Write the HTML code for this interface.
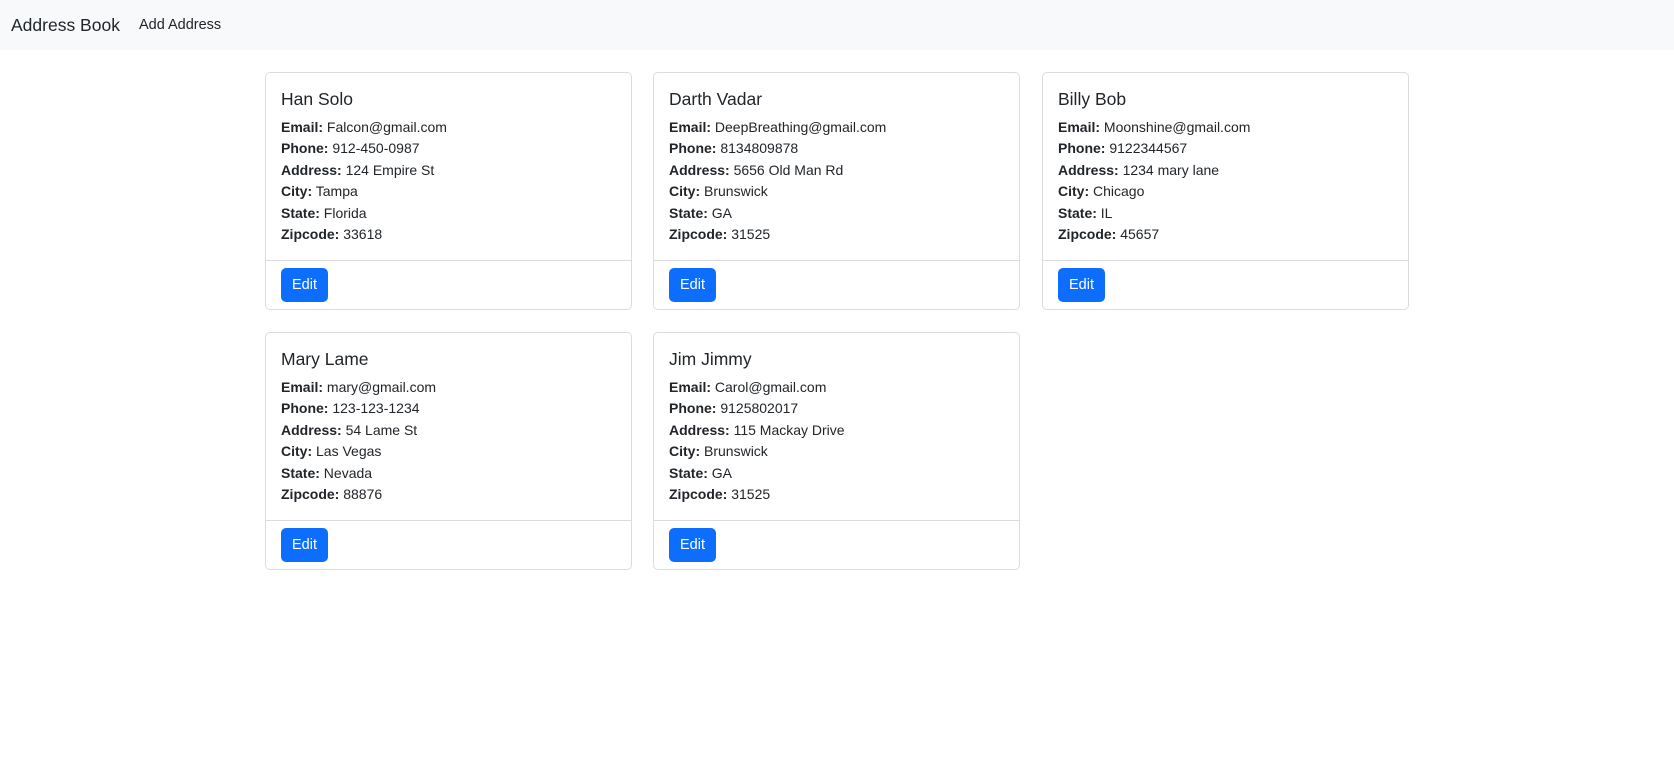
<!DOCTYPE html>
<html><head><style>
body{margin:0;font-family:"Liberation Sans",sans-serif;color:#212529;background:#fff;}
.nav{height:50px;background:#f8f9fa;display:flex;align-items:center;}
.brand{margin-left:11px;font-size:17.5px;}
.link{margin-left:19px;font-size:14.5px;}
.card{position:absolute;width:367px;height:238px;border:1px solid #dcdcdc;border-radius:5px;box-sizing:border-box;}
.body{padding:15px 15px 0 15px;height:188px;box-sizing:border-box;border-bottom:1px solid #dcdcdc;}
h5{margin:0 0 7px;font-weight:normal;font-size:17.5px;line-height:22px;}
.ln{font-size:14px;line-height:21.4px;}
b{font-weight:bold;}
.btn{position:absolute;left:15px;top:195px;width:47px;height:34px;background:#0d6efd;color:#fff;border-radius:5px;font-size:14.5px;line-height:34px;text-align:center;}
</style></head><body>
<div class="nav"><span class="brand">Address Book</span><span class="link">Add Address</span></div>

<div class="card" style="left:265px;top:72px"><div class="body"><h5>Han Solo</h5>
<div class="ln"><b>Email:</b> Falcon@gmail.com</div><div class="ln"><b>Phone:</b> 912-450-0987</div><div class="ln"><b>Address:</b> 124 Empire St</div><div class="ln"><b>City:</b> Tampa</div><div class="ln"><b>State:</b> Florida</div><div class="ln"><b>Zipcode:</b> 33618</div></div><div class="btn">Edit</div></div>

<div class="card" style="left:653px;top:72px"><div class="body"><h5>Darth Vadar</h5>
<div class="ln"><b>Email:</b> DeepBreathing@gmail.com</div><div class="ln"><b>Phone:</b> 8134809878</div><div class="ln"><b>Address:</b> 5656 Old Man Rd</div><div class="ln"><b>City:</b> Brunswick</div><div class="ln"><b>State:</b> GA</div><div class="ln"><b>Zipcode:</b> 31525</div></div><div class="btn">Edit</div></div>

<div class="card" style="left:1042px;top:72px"><div class="body"><h5>Billy Bob</h5>
<div class="ln"><b>Email:</b> Moonshine@gmail.com</div><div class="ln"><b>Phone:</b> 9122344567</div><div class="ln"><b>Address:</b> 1234 mary lane</div><div class="ln"><b>City:</b> Chicago</div><div class="ln"><b>State:</b> IL</div><div class="ln"><b>Zipcode:</b> 45657</div></div><div class="btn">Edit</div></div>

<div class="card" style="left:265px;top:332px"><div class="body"><h5>Mary Lame</h5>
<div class="ln"><b>Email:</b> mary@gmail.com</div><div class="ln"><b>Phone:</b> 123-123-1234</div><div class="ln"><b>Address:</b> 54 Lame St</div><div class="ln"><b>City:</b> Las Vegas</div><div class="ln"><b>State:</b> Nevada</div><div class="ln"><b>Zipcode:</b> 88876</div></div><div class="btn">Edit</div></div>

<div class="card" style="left:653px;top:332px"><div class="body"><h5>Jim Jimmy</h5>
<div class="ln"><b>Email:</b> Carol@gmail.com</div><div class="ln"><b>Phone:</b> 9125802017</div><div class="ln"><b>Address:</b> 115 Mackay Drive</div><div class="ln"><b>City:</b> Brunswick</div><div class="ln"><b>State:</b> GA</div><div class="ln"><b>Zipcode:</b> 31525</div></div><div class="btn">Edit</div></div>
</body></html>
